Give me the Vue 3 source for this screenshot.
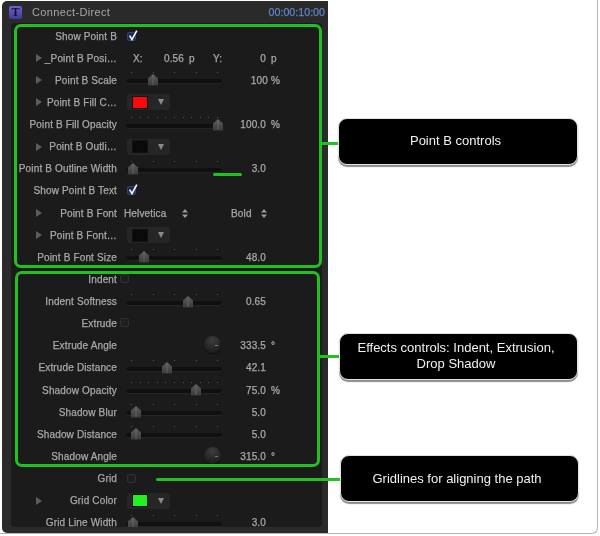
<script setup>
const rows = [
  { label: 'Show Point B', type: 'check', checked: true },
  { label: '_Point B Posi…', type: 'pos', arrow: true },
  { label: 'Point B Scale', type: 'slider', arrow: true, thumb: 27, ticks: 5, value: '100', unit: '%', nudge: true },
  { label: 'Point B Fill C…', type: 'color', arrow: true, color: '#f60a0a' },
  { label: 'Point B Fill Opacity', type: 'slider', thumb: 91.5, ticks: 11, value: '100.0', unit: '%' },
  { label: 'Point B Outli…', type: 'color', arrow: true, color: '#0a0a0a' },
  { label: 'Point B Outline Width', type: 'slider', thumb: 7, ticks: 5, value: '3.0' },
  { label: 'Show Point B Text', type: 'check', checked: true },
  { label: 'Point B Font', type: 'font', arrow: true },
  { label: 'Point B Font…', type: 'color', arrow: true, color: '#0a0a0a' },
  { label: 'Point B Font Size', type: 'slider', thumb: 18, ticks: 5, value: '48.0' },
  { label: 'Indent', type: 'check', tight: true },
  { label: 'Indent Softness', type: 'slider', thumb: 62, ticks: 5, value: '0.65' },
  { label: 'Extrude', type: 'check', tight: true },
  { label: 'Extrude Angle', type: 'dial', value: '333.5', unit: '°' },
  { label: 'Extrude Distance', type: 'slider', thumb: 41, ticks: 5, value: '42.1' },
  { label: 'Shadow Opacity', type: 'slider', thumb: 70, ticks: 11, value: '75.0', unit: '%' },
  { label: 'Shadow Blur', type: 'slider', thumb: 9.5, ticks: 5, value: '5.0' },
  { label: 'Shadow Distance', type: 'slider', thumb: 9.5, ticks: 5, value: '5.0' },
  { label: 'Shadow Angle', type: 'dial', value: '315.0', unit: '°' },
  { label: 'Grid', type: 'check' },
  { label: 'Grid Color', type: 'color', arrow: true, color: '#1ff21f' },
  { label: 'Grid Line Width', type: 'slider', thumb: 6.5, ticks: 5, value: '3.0' },
]
</script>

<template>
  <div class="page">
    <div class="frame">
      <section class="panel">
        <header class="head">
          <span class="app-icon">T</span>
          <span class="title">Connect-Direct</span>
          <span class="time">00:00:10:00</span>
        </header>
        <div class="body">
          <div v-for="row in rows" :key="row.label" class="row">
            <div class="label-cell">
              <span v-if="row.arrow" class="arrow"></span>
              <span class="label">{{ row.label }}</span>
            </div>

            <div v-if="row.type === 'check'" class="control">
              <span class="check" :class="{ on: row.checked, tight: row.tight }">
                <svg v-if="row.checked" width="12" height="13" viewBox="0 0 12 13">
                  <path d="M2.6 6.6 5 10.6 9.8 1.6" fill="none" stroke="#eef3ff" stroke-width="1.7" />
                </svg>
              </span>
            </div>

            <div v-else-if="row.type === 'pos'" class="pos">
              <span>X:</span><span class="num">0.56</span><span class="unit">p</span>
              <span>Y:</span><span class="num">0</span><span class="unit">p</span>
            </div>

            <div v-else-if="row.type === 'font'" class="fonts">
              <span class="font-name">Helvetica</span>
              <svg class="updown first" width="6" height="9" viewBox="0 0 6 9"><path d="M3 0 6 3.4H0ZM0 5.6H6L3 9Z" fill="#9a9a9a" /></svg>
              <span class="font-style">Bold</span>
              <svg class="updown" width="6" height="9" viewBox="0 0 6 9"><path d="M3 0 6 3.4H0ZM0 5.6H6L3 9Z" fill="#9a9a9a" /></svg>
            </div>

            <div v-else-if="row.type === 'color'" class="control">
              <span class="well">
                <span class="swatch" :style="{ background: row.color }"></span>
                <span class="drop"></span>
              </span>
            </div>

            <template v-else>
              <div v-if="row.type === 'slider'" class="slider">
                <div class="ticks"><i v-for="n in row.ticks" :key="n"></i></div>
                <div class="track"></div>
                <svg class="thumb" :style="{ left: row.thumb + 'px' }" width="10" height="12" viewBox="0 0 10 12">
                  <defs>
                    <linearGradient id="thumbFill" x1="0" y1="0" x2="0" y2="1">
                      <stop offset="0" stop-color="#5d5d5d" />
                      <stop offset="1" stop-color="#3b3b3b" />
                    </linearGradient>
                  </defs>
                  <path d="M5 0 10 4.5V11.4H0V4.5Z" fill="url(#thumbFill)" />
                  <path d="M5 1V11" stroke="#777" stroke-width=".6" />
                </svg>
              </div>
              <div v-else class="dial-cell"><span class="dial"><i></i></span></div>
              <span class="value" :class="{ nudge: row.nudge }">{{ row.value }}</span>
              <span class="unit-cell">{{ row.unit }}</span>
            </template>
          </div>
        </div>
      </section>
      <div class="side"></div>
    </div>

    <!-- Annotations lying over the screenshot -->
    <div class="box box-b"></div>
    <div class="box box-fx"></div>
    <div class="line l-b"></div>
    <div class="line l-fx"></div>
    <div class="line l-grid"></div>
    <div class="line l-small"></div>
    <div class="callout c-b">Point B controls</div>
    <div class="callout c-fx">Effects controls: Indent, Extrusion,<br />Drop Shadow</div>
    <div class="callout c-grid">Gridlines for aligning the path</div>
  </div>
</template>

<style>
html, body { margin: 0; background: #fff; }
</style>

<style scoped>
.page {
  position: relative;
  width: 600px;
  height: 536px;
  overflow: hidden;
  background: #fff;
  font-family: "Liberation Sans", Arial, sans-serif;
  filter: blur(0.55px);
}
.frame {
  box-sizing: border-box;
  display: flex;
  width: 598px;
  height: 534px;
  padding: 1px 0 0 2px;
  border-right: 1px solid #b5b5b5;
  border-bottom: 1px solid #b5b5b5;
  border-bottom-right-radius: 6px;
}
.panel {
  display: flex;
  flex-direction: column;
  width: 326px;
  height: 532px;
  background: #2a2a2a;
  border-radius: 5px 0 0 5px;
}
.side { flex: 1; }
.head {
  display: flex;
  align-items: center;
  flex: none;
  height: 22px;
  padding: 0 3px 0 7px;
}
.app-icon {
  box-sizing: border-box;
  width: 13px;
  height: 13px;
  margin-right: 10px;
  border-radius: 2px;
  background: linear-gradient(#6f63d0, #3f3a94);
  color: #15122f;
  font: bold 12px/13px "Liberation Serif", serif;
  text-align: center;
}
.title {
  flex: 1;
  color: #a8a8a8;
  font-size: 11px;
  letter-spacing: 0.35px;
}
.time {
  color: #5f85c6;
  font-size: 10.7px;
  -webkit-text-stroke: 0.25px #5f85c6;
}
.body {
  flex: none;
  height: 504px;
  margin: 0 6px 0 9px;
  padding-top: 2px;
  box-sizing: border-box;
  overflow: hidden;
  border-radius: 4px;
  background: #1b1b1b;
}
.row {
  display: grid;
  grid-template-columns: 115px 96px 44px 1fr;
  align-items: center;
  height: 22.13px;
  color: #a8a8a8;
  font-size: 10px;
  letter-spacing: 0.15px;
  -webkit-text-stroke: 0.25px #a8a8a8;
}
.label-cell {
  box-sizing: border-box;
  display: flex;
  align-items: center;
  padding-right: 9px;
  white-space: nowrap;
}
.label { margin-left: auto; }
.arrow {
  flex: none;
  width: 0;
  height: 0;
  margin-left: 25px;
  border-left: 6px solid #5c5c5c;
  border-top: 4px solid transparent;
  border-bottom: 4px solid transparent;
}
.control {
  grid-column: 2 / -1;
  display: flex;
  align-items: center;
}
.check {
  box-sizing: border-box;
  position: relative;
  width: 9px;
  height: 9px;
  margin-left: 1px;
  border: 1px solid #303030;
  border-radius: 2px;
  background: #1f1f1f;
}
.check.tight { margin-left: -6px; margin-top: -2px; }
.check.on {
  background: #1c2c50;
  border-color: #2f4270;
}
.check svg {
  position: absolute;
  left: -1px;
  top: -4px;
}
.pos {
  grid-column: 2 / -1;
  display: grid;
  grid-template-columns: 7px 44px 29px 8px 45px 1fr;
  padding-left: 7px;
}
.num { text-align: right; }
.unit { padding-left: 5px; }
.fonts {
  grid-column: 2 / -1;
  display: flex;
  align-items: center;
  margin-left: -2px;
}
.font-name { width: 58px; }
.updown.first { margin-right: 43px; }
.font-style { width: 30px; }
.well {
  box-sizing: border-box;
  display: flex;
  align-items: center;
  width: 43px;
  height: 16px;
  margin-left: 1px;
  padding: 0 6px;
  border-radius: 3px;
  background: #262626;
}
.swatch {
  flex: none;
  width: 14px;
  height: 11px;
  outline: 1px solid #111;
}
.drop {
  flex: none;
  width: 0;
  height: 0;
  margin-left: 11px;
  border-top: 6px solid #8a8a8a;
  border-left: 3.5px solid transparent;
  border-right: 3.5px solid transparent;
}
.slider {
  position: relative;
  height: 22px;
}
.ticks {
  position: absolute;
  left: 5px;
  right: 4px;
  top: 3px;
  display: flex;
  justify-content: space-between;
}
.ticks i {
  width: 1px;
  height: 1px;
  background: #565656;
}
.track {
  position: absolute;
  left: 0;
  right: 0;
  top: 10px;
  height: 4px;
  border-radius: 2px;
  background: #101010;
  box-shadow: 0 1px 0 #242424;
}
.thumb {
  position: absolute;
  top: 5px;
  margin-left: -5px;
}
.dial-cell {
  display: flex;
  justify-content: flex-end;
}
.dial {
  position: relative;
  width: 17px;
  height: 17px;
  margin-right: 1px;
  margin-top: -2px;
  border-radius: 50%;
  background: radial-gradient(circle at 50% 25%, #3e3e3e, #262626 55%, #161616);
  box-shadow: 0 1px 1px #0c0c0c;
}
.dial i {
  position: absolute;
  left: 11px;
  top: 9px;
  width: 3px;
  height: 1px;
  background: #777;
}
.value { text-align: right; }
.value.nudge { margin-right: -2px; }
.unit-cell { padding-left: 5px; }

.box {
  position: absolute;
  box-sizing: border-box;
  border: 3px solid #1fc21f;
  border-radius: 7px;
}
.box-b { left: 14px; top: 24px; width: 308px; height: 244px; }
.box-fx { left: 15px; top: 271px; width: 305px; height: 196px; }
.line {
  position: absolute;
  background: #1fc21f;
}
.l-b { left: 321px; top: 142px; width: 18px; height: 3px; }
.l-fx { left: 319px; top: 355px; width: 21px; height: 3px; }
.l-grid { left: 156px; top: 478px; width: 186px; height: 3px; border-radius: 2px; }
.l-small { left: 213px; top: 173px; width: 29px; height: 3px; border-radius: 2px; }
.callout {
  position: absolute;
  box-sizing: border-box;
  display: flex;
  align-items: center;
  justify-content: center;
  border: 1px solid #e2e2e2;
  border-radius: 9px;
  background: #000;
  box-shadow: 0 2px 1px #8c8c8c;
  color: #f0f0f0;
  font-size: 13px;
  line-height: 16px;
  text-align: center;
  padding-right: 5px;
}
.c-b { left: 338px; top: 118px; width: 240px; height: 47px; padding-bottom: 1px; }
.c-fx { left: 339px; top: 333px; width: 239px; height: 47px; padding-bottom: 1px; }
.c-grid { left: 340px; top: 455px; width: 239px; height: 47px; }
</style>
